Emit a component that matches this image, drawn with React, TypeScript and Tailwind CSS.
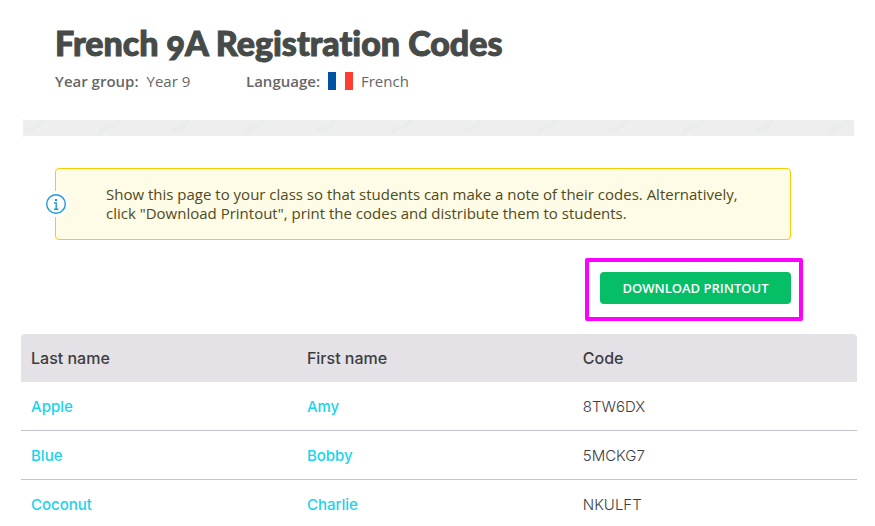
const students = [
  { last: "Apple", first: "Amy", code: "8TW6DX" },
  { last: "Blue", first: "Bobby", code: "5MCKG7" },
  { last: "Coconut", first: "Charlie", code: "NKULFT" },
];

function FrenchFlag() {
  return (
    <svg className="ml-2 mr-2 h-[18px] w-[25px]" viewBox="0 0 25 18" aria-hidden="true">
      <rect width="25" height="18" fill="#fff" />
      <rect width="8" height="18" fill="#0052a5" />
      <rect x="17" width="8" height="18" fill="#ff3d33" />
    </svg>
  );
}

function InfoIcon() {
  return (
    <svg className="h-[26px] w-[26px]" viewBox="0 0 26 26" aria-hidden="true">
      <circle cx="13" cy="13" r="13" fill="#fff" />
      <circle cx="13" cy="13" r="9.3" fill="#fff" stroke="#1c9ad6" strokeWidth="1.4" />
      <rect x="12" y="8" width="2" height="2" fill="#1c9ad6" />
      <path d="M11 12h2.2v6M11 18.2h4.4" fill="none" stroke="#1c9ad6" strokeWidth="1.4" />
    </svg>
  );
}

function Divider() {
  return (
    <svg className="block h-5 w-full" aria-hidden="true">
      <defs>
        <pattern id="wisps" width="146" height="20" patternUnits="userSpaceOnUse">
          <path d="M2 12Q13 12 20 3" fill="none" stroke="#eaecec" strokeWidth="4" />
          <path d="M77 17Q78 11 86 9T95 2" fill="none" stroke="#eaecec" strokeWidth="4" />
        </pattern>
      </defs>
      <rect y="2" width="100%" height="16" fill="#eee" />
      <rect y="2" width="100%" height="16" fill="url(#wisps)" />
      <path d="M0 0Q0 2 3 2H0ZM0 20Q0 18 3 18H0Z" fill="#eee" />
    </svg>
  );
}

export default function App() {
  return (
    <main className="overflow-hidden bg-white pl-[21px] pr-[18px] font-['Open_Sans',sans-serif]">
      <header className="px-[34px] pt-[23px]">
        <h1 className="font-['Lato',sans-serif] text-[34px] font-black leading-10 text-[#464a49] [-webkit-text-stroke:1px_#464a49] [font-variant-ligatures:none] oldstyle-nums">
          French 9A Registration Codes
        </h1>
        <dl className="mt-1 flex text-[15px] leading-7 text-[#666]">
          <div className="flex w-[191px]">
            <dt className="font-semibold">Year group:</dt>
            <dd className="ml-2">Year 9</dd>
          </div>
          <div className="flex items-center">
            <dt className="font-semibold">Language:</dt>
            <dd className="flex items-center">
              <FrenchFlag />
              French
            </dd>
          </div>
        </dl>
      </header>

      <div className="ml-0.5 mr-[3px] mt-[23px]">
        <Divider />
      </div>

      <div className="ml-[34px] mr-[66px]">
        <aside className="relative mt-[30px] rounded border border-[#f5d000] bg-[#fefbe6] py-4 pl-[50px] pr-10 text-[15px] leading-[19px] text-[#4f4a20]">
          <span className="absolute -left-[13px] top-[22px]">
            <InfoIcon />
          </span>
          <p>
            Show this page to your class so that students can make a note of their codes. Alternatively,
            click "Download Printout", print the codes and distribute them to students.
          </p>
        </aside>
      </div>

      <div className="mr-[54px] mt-[18px] flex justify-end">
        <div className="rounded-xs border-4 border-[#f0f] pb-[13px] pl-[11px] pr-2 pt-2.5">
          <button
            type="button"
            className="block h-8 w-[191px] rounded bg-[#06be65] pt-0.5 text-[13px] font-semibold text-white"
          >
            DOWNLOAD PRINTOUT
          </button>
        </div>
      </div>

      <table className="mt-[13px] w-full table-fixed border-separate border-spacing-0 text-left font-['Inter',sans-serif] text-[15px] text-[#3d3d40]">
        <thead className="bg-[#e4e2e7] text-base">
          <tr className="h-12">
            <th className="w-[33%] rounded-tl px-2.5 font-medium">Last name</th>
            <th className="w-[33%] px-2.5 font-medium">First name</th>
            <th className="rounded-tr px-2.5 font-medium">Code</th>
          </tr>
        </thead>
        <tbody>
          {students.map((s) => (
            <tr key={s.code} className="group h-[49px]">
              <td className="border-b border-[#c5c3cb] px-2.5 pt-0.5 font-medium text-[#18d4ec] group-last:border-transparent">
                <a href="#">{s.last}</a>
              </td>
              <td className="border-b border-[#c5c3cb] px-2.5 pt-0.5 font-medium text-[#18d4ec] group-last:border-transparent">
                <a href="#">{s.first}</a>
              </td>
              <td className="border-b border-[#c5c3cb] px-2.5 pt-0.5 font-light group-last:border-transparent">
                {s.code}
              </td>
            </tr>
          ))}
        </tbody>
      </table>
    </main>
  );
}
